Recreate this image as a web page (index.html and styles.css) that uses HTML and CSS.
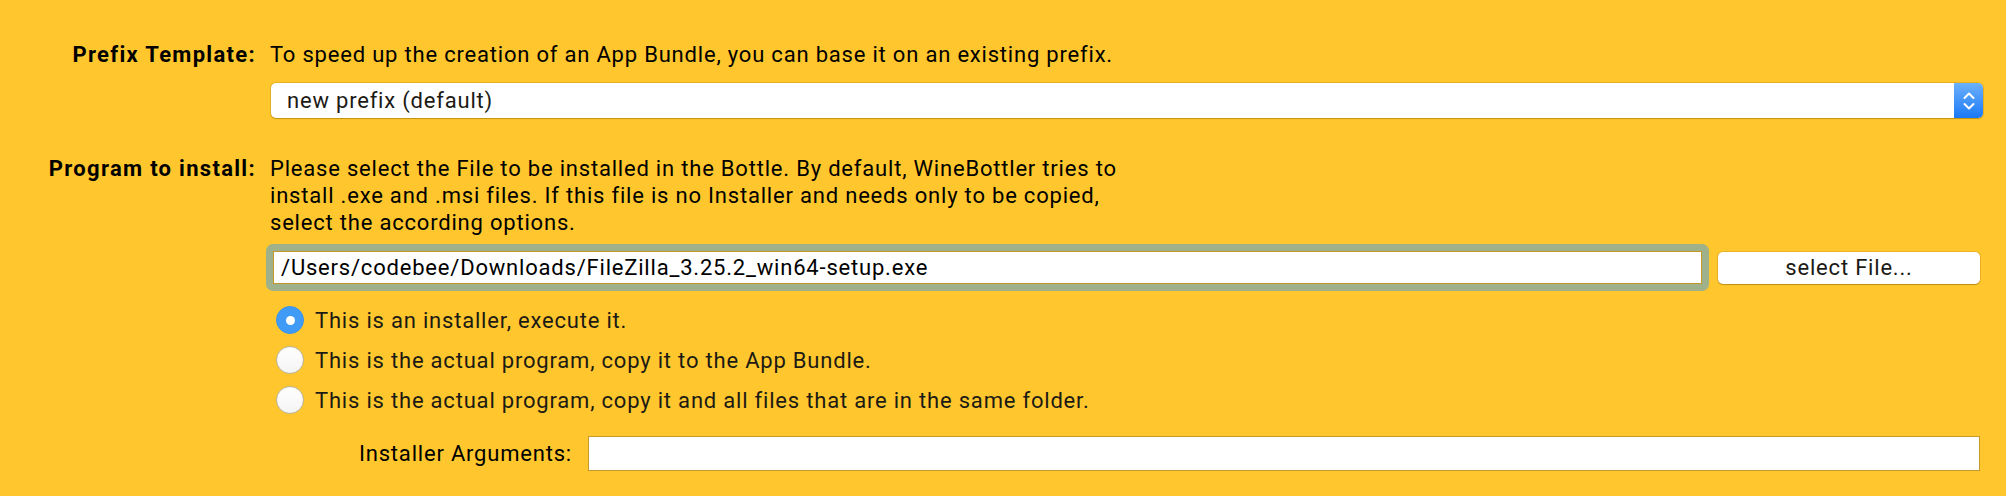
FILE: index.html
```html
<!DOCTYPE html>
<html>
<head>
<meta charset="utf-8">
<link rel="stylesheet" href="styles.css">
</head>
<body>
<div class="form">
  <div class="label row1">Prefix Template:</div>
  <div class="content row1">
    <div class="desc">To speed up the creation of an App Bundle, you can base it on an existing prefix.</div>
    <div class="popup">
      <span class="popup-text">new prefix (default)</span>
      <span class="stepper">
        <svg width="14" height="22" viewBox="0 0 14 22"><path d="M2.5 8 L7 3.5 L11.5 8 M2.5 14 L7 18.5 L11.5 14" fill="none" stroke="#fff" stroke-width="2" stroke-linecap="round" stroke-linejoin="round"/></svg>
      </span>
    </div>
  </div>

  <div class="label row2">Program to install:</div>
  <div class="content row2">
    <div class="desc">Please select the File to be installed in the Bottle. By default, WineBottler tries to<br>install .exe and .msi files. If this file is no Installer and needs only to be copied,<br>select the according options.</div>
    <div class="file-row">
      <div class="focus-ring">
        <div class="field">/Users/codebee/Downloads/FileZilla_3.25.2_win64-setup.exe</div>
      </div>
      <div class="button">select File...</div>
    </div>
    <div class="radios">
      <div class="radio-row"><span class="radio checked"></span><span>This is an installer, execute it.</span></div>
      <div class="radio-row"><span class="radio"></span><span>This is the actual program, copy it to the App Bundle.</span></div>
      <div class="radio-row"><span class="radio"></span><span>This is the actual program, copy it and all files that are in the same folder.</span></div>
    </div>
    <div class="args-row">
      <span class="args-label">Installer Arguments:</span>
      <div class="field args-field"></div>
    </div>
  </div>
</div>
</body>
</html>
```

FILE: styles.css
```css
html, body {
  margin: 0;
  padding: 0;
}
body {
  background: #ffc72d;
  font-family: Roboto, "Liberation Sans", sans-serif;
  font-size: 22px;
  line-height: 27px;
  letter-spacing: 0.8px;
  color: #1c1a14;
  width: 2006px;
  height: 496px;
  overflow: hidden;
}
.form {
  display: grid;
  grid-template-columns: 256px 1fr;
  column-gap: 14px;
  padding: 41px 23px 0 0;
  row-gap: 37px;
}
.label {
  text-align: right;
  font-weight: 700;
  letter-spacing: 1.3px;
  color: #000;
}
.content {
  display: flex;
  flex-direction: column;
}
.desc {
  color: #000;
}
.popup {
  margin: 15px 0 0 1px;
  height: 35px;
  background: #fff;
  border-radius: 5px;
  box-shadow: 0 0 0 1px rgba(150, 110, 0, 0.25), 0 1px 1px rgba(150, 110, 0, 0.45);
  display: flex;
  align-items: center;
  justify-content: space-between;
}
.popup-text {
  padding-left: 16px;
  color: #1c1a14;
}
.stepper {
  width: 29px;
  height: 35px;
  border-radius: 0 5px 5px 0;
  background: linear-gradient(#6cb1fb, #1b79f6);
  display: flex;
  align-items: center;
  justify-content: center;
}
.file-row {
  display: flex;
  align-items: center;
  margin-top: 8px;
}
.focus-ring {
  flex: 1;
  margin-left: -4px;
  padding: 7px;
  border-radius: 7px;
  background: #9fb18b;
}
.field {
  height: 31px;
  background: #fff;
  border: 1px solid #c4982a;
  padding-left: 7px;
  line-height: 31px;
  color: #000;
}
.button {
  width: 262px;
  height: 32px;
  margin-left: 9px;
  margin-right: 3px;
  background: #fff;
  border-radius: 5px;
  box-shadow: 0 0 0 1px rgba(150, 110, 0, 0.2), 0 1px 1px rgba(150, 110, 0, 0.5);
  text-align: center;
  line-height: 32px;
  color: #1c1a14;
}
.radios {
  display: flex;
  flex-direction: column;
  margin-top: 15px;
  margin-left: 6px;
  row-gap: 12px;
}
.radio-row {
  display: flex;
  align-items: center;
  height: 28px;
  column-gap: 11px;
}
.radio {
  width: 26px;
  height: 26px;
  border-radius: 50%;
  background: linear-gradient(#ffffff, #f4f4f4);
  border: 1px solid #b9b2a0;
  box-sizing: content-box;
  display: flex;
  align-items: center;
  justify-content: center;
}
.radio.checked {
  background: #3f9bf6;
  border-color: #3b93ec;
}
.radio.checked::after {
  content: "";
  width: 9px;
  height: 9px;
  border-radius: 50%;
  background: #fff;
}
.args-row {
  display: flex;
  align-items: center;
  margin-top: 22px;
  margin-right: 3px;
  column-gap: 16px;
}
.args-label {
  width: 302px;
  flex: none;
  text-align: right;
  color: #000;
}
.args-field {
  flex: 1;
  height: 33px;
}
```
